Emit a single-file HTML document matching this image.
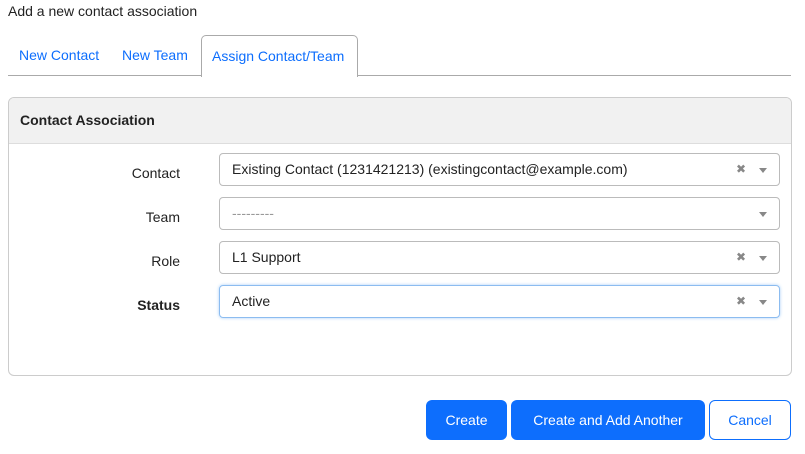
<!DOCTYPE html>
<html><head><style>
body{margin:0;width:805px;height:454px;background:#fff;font-family:"Liberation Sans",sans-serif;color:#222;position:relative;overflow:hidden}
.a{position:absolute}
.h{left:8px;top:3px;font-size:14px}
.tab{top:47px;font-size:14px;color:#0d6efd}
.tl{left:8px;top:75px;width:783px;height:1px;background:#aaa}
.at{left:201px;top:35px;width:155px;height:41px;border:1px solid #aaa;border-bottom:none;border-radius:5px 5px 0 0;background:#fff}
.card{left:8px;top:97px;width:782px;height:277px;border:1px solid #ccc;border-radius:6px;overflow:hidden}
.ch{height:45px;background:#f1f1f1;border-bottom:1px solid #ddd;font-weight:bold;font-size:14px;line-height:45px;padding-left:11px}
.lb{width:170px;text-align:right;font-size:14px}
.sel{left:219px;width:559px;height:31px;border:1px solid #bbb;border-radius:4px;font-size:14px;line-height:31px;box-sizing:border-box;padding-left:12px;width:561px;height:33px}
.x{position:absolute;right:33px;top:0;color:#888;font-size:12px}
.ar{position:absolute;right:12px;top:14px;border:4px solid transparent;border-top:5px solid #888;border-bottom:none}
.btn{top:400px;height:40px;border-radius:6px;background:#0d6efd;color:#fff;font-size:14px;line-height:40px;text-align:center}
</style></head><body>
<div class="a h">Add a new contact association</div>
<div class="a tl"></div>
<div class="a at"></div>
<div class="a tab" style="left:19px">New Contact</div>
<div class="a tab" style="left:122px">New Team</div>
<div class="a tab" style="left:212px;top:48px">Assign Contact/Team</div>
<div class="a card"><div class="ch">Contact Association</div></div>
<div class="a lb" style="left:10px;top:165px">Contact</div>
<div class="a lb" style="left:10px;top:209px">Team</div>
<div class="a lb" style="left:10px;top:253px">Role</div>
<div class="a lb" style="left:10px;top:297px;font-weight:bold">Status</div>
<div class="a sel" style="top:153px">Existing Contact (1231421213) (existingcontact@example.com)<span class="x">✖</span><span class="ar"></span></div>
<div class="a sel" style="top:197px;color:#999">---------<span class="ar"></span></div>
<div class="a sel" style="top:241px">L1 Support<span class="x">✖</span><span class="ar"></span></div>
<div class="a sel" style="top:285px;border-color:#8cbcf0;box-shadow:0 0 3px #a8cff8">Active<span class="x">✖</span><span class="ar"></span></div>
<div class="a btn" style="left:426px;width:81px">Create</div>
<div class="a btn" style="left:511px;width:194px">Create and Add Another</div>
<div class="a btn" style="left:709px;width:80px;height:38px;line-height:38px;background:#fff;border:1px solid #0d6efd;color:#0d6efd">Cancel</div>
</body></html>
